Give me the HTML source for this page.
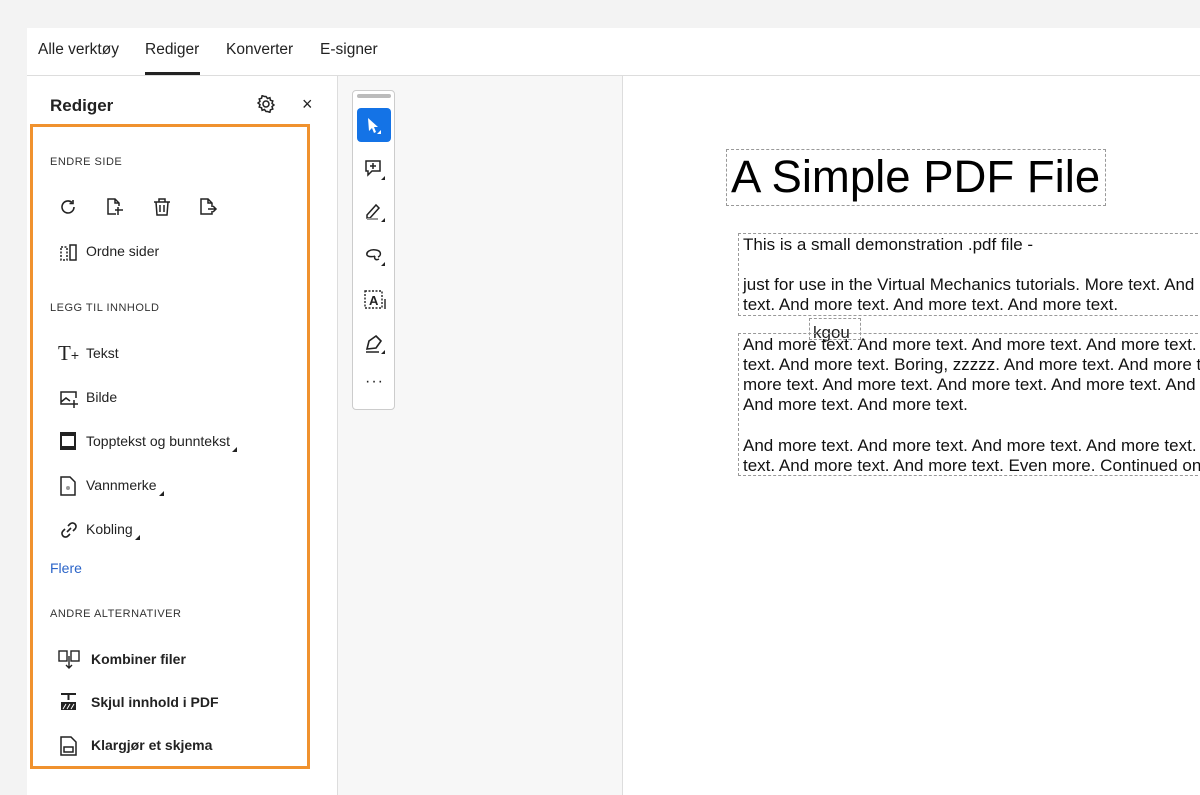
<!DOCTYPE html>
<html><head><style>
*{margin:0;padding:0;box-sizing:border-box}
body{width:1200px;height:795px;overflow:hidden;background:#f3f3f3;font-family:"Liberation Sans",sans-serif;color:#222;position:relative}
.abs{position:absolute}
.tabs{left:27px;top:28px;width:1173px;height:48px;background:#fff;border-bottom:1px solid #ddd}
.tab{position:absolute;top:13px;font-size:15.5px;color:#222}
.panel{left:27px;top:76px;width:311px;height:719px;background:#fff;border-right:1px solid #ddd}
.mid{left:338px;top:76px;width:284px;height:719px;background:#f7f7f7}
.page{left:622px;top:76px;width:578px;height:719px;background:#fff;border-left:1px solid #ddd;overflow:hidden}
.hl{left:30px;top:124px;width:280px;height:645px;border:3px solid #f0922e}
.sec{position:absolute;left:50px;font-size:11px;letter-spacing:.5px;color:#333}
.item{position:absolute;left:86px;font-size:14px;color:#222}
.b{font-weight:bold;left:91px}
.ic{position:absolute}
.tri{display:inline-block;width:0;height:0;border-left:5px solid transparent;border-bottom:5px solid #222;margin-left:2px;vertical-align:-6px}
.tb{left:352px;top:90px;width:43px;height:320px;background:#fff;border:1px solid #ccc;border-radius:4px}
.dot{border:1px dashed #999}
.pt{font-size:17px;color:#111;line-height:20px;white-space:nowrap}
</style></head><body>
<div class="abs tabs">
<span class="tab" style="left:11px">Alle verktøy</span>
<span class="tab" style="left:118px">Rediger</span>
<div class="abs" style="left:118px;top:44px;width:55px;height:3px;background:#222"></div>
<span class="tab" style="left:199px">Konverter</span>
<span class="tab" style="left:293px">E-signer</span>
</div>
<div class="abs panel"></div>
<div class="abs mid"></div>
<div class="abs page">
<div class="abs dot" style="left:103px;top:73px;width:380px;height:57px"></div>
<div class="abs" style="left:108px;top:75px;font-size:45.5px;color:#000;line-height:52px;white-space:nowrap">A Simple PDF File</div>
<div class="abs dot" style="left:115px;top:157px;width:470px;height:83px"></div>
<div class="abs pt" style="left:120px;top:159px">This is a small demonstration .pdf file -</div>
<div class="abs pt" style="left:120px;top:199px">just for use in the Virtual Mechanics tutorials. More text. And more<br>text. And more text. And more text. And more text.</div>
<div class="abs dot" style="left:186px;top:242px;width:52px;height:22px"></div>
<div class="abs" style="left:190px;top:247px;font-size:17px">kgou</div>
<div class="abs dot" style="left:115px;top:257px;width:470px;height:143px"></div>
<div class="abs pt" style="left:120px;top:259px">And more text. And more text. And more text. And more text. And more<br>text. And more text. Boring, zzzzz. And more text. And more text. And<br>more text. And more text. And more text. And more text. And more<br>And more text. And more text.</div>
<div class="abs pt" style="left:120px;top:360px">And more text. And more text. And more text. And more text. And more<br>text. And more text. And more text. Even more. Continued on page 2 ...</div>
</div>
<div class="abs" style="left:50px;top:96px;font-size:17px;font-weight:bold">Rediger</div>
<svg class="ic" style="left:257px;top:95px" width="18" height="18" viewBox="0 0 18 18" fill="none" stroke="#222" stroke-width="1.5"><circle cx="9" cy="9" r="3"/><path d="M9 1.5l1.5 2 2.4-.8.5 2.5 2.4.8-.8 2.4 2 1.6-2 1.6.8 2.4-2.4.8-.5 2.5-2.4-.8L9 16.5l-1.5-2-2.4.8-.5-2.5-2.4-.8.8-2.4-2-1.6 2-1.6-.8-2.4 2.4-.8.5-2.5 2.4.8z"/></svg>
<div class="abs" style="left:302px;top:94px;font-size:18px">×</div>
<div class="abs hl"></div>
<div class="sec" style="top:156px">ENDRE SIDE</div>
<svg class="ic" style="left:59px;top:198px" width="18" height="18" viewBox="0 0 18 18" fill="none" stroke="#222" stroke-width="1.6"><path d="M15 9a6 6 0 1 1-2-4.5"/><path d="M14 2v3.5h-3.5"/></svg>
<svg class="ic" style="left:105px;top:197px" width="20" height="20" viewBox="0 0 20 20" fill="none" stroke="#222" stroke-width="1.5"><path d="M11 17H3V2h7l4 4v3"/><path d="M10 2v4h4M13 10v8M10 13h8"/></svg>
<svg class="ic" style="left:152px;top:197px" width="20" height="20" viewBox="0 0 20 20" fill="none" stroke="#222" stroke-width="1.5"><path d="M2 5h16M7 5V2h6v3M4 5l1 13h10l1-13M8 8v7M12 8v7"/></svg>
<svg class="ic" style="left:198px;top:197px" width="20" height="20" viewBox="0 0 20 20" fill="none" stroke="#222" stroke-width="1.5"><path d="M14 10V6l-4-4H3v15h11v-3"/><path d="M10 2v4h4M10 12h8M15 9l3 3-3 3"/></svg>
<svg class="ic" style="left:58px;top:242px" width="20" height="20" viewBox="0 0 20 20" fill="none" stroke="#222" stroke-width="1.5"><rect x="12" y="3" width="6" height="15"/><path d="M3 5h6v13H3z" stroke-dasharray="2 1.5"/></svg>
<div class="item" style="top:243px">Ordne sider</div>
<div class="sec" style="top:302px">LEGG TIL INNHOLD</div>
<div class="ic" style="left:58px;top:341px;font-family:'Liberation Serif';font-size:21px">T<span style="font-size:14px;font-family:'Liberation Sans'">+</span></div>
<div class="item" style="top:345px">Tekst</div>
<svg class="ic" style="left:59px;top:389px" width="20" height="20" viewBox="0 0 20 20" fill="none" stroke="#222" stroke-width="1.5"><path d="M12 15H2V3h15v6M2 13l5-4 4 3M15 11v8M11 15h8"/></svg>
<div class="item" style="top:389px">Bilde</div>
<svg class="ic" style="left:60px;top:432px" width="16" height="18" viewBox="0 0 16 18"><rect x="0" y="0" width="16" height="18" fill="#222"/><rect x="2" y="4" width="12" height="10" fill="#fff"/></svg>
<div class="item" style="top:433px">Topptekst og bunntekst<span class="tri"></span></div>
<svg class="ic" style="left:60px;top:476px" width="16" height="20" viewBox="0 0 16 20" fill="none" stroke="#222" stroke-width="1.5"><path d="M1 1h9l5 5v13H1z"/><circle cx="8" cy="12" r="2" fill="#999" stroke="none"/></svg>
<div class="item" style="top:477px">Vannmerke<span class="tri"></span></div>
<svg class="ic" style="left:59px;top:520px" width="20" height="20" viewBox="0 0 20 20" fill="none" stroke="#222" stroke-width="1.6"><path d="M8 12l4-4M9 6l2-2a3 3 0 0 1 5 5l-2 2M11 14l-2 2a3 3 0 0 1-5-5l2-2"/></svg>
<div class="item" style="top:521px">Kobling<span class="tri"></span></div>
<div class="abs" style="left:50px;top:560px;font-size:14px;color:#2b64c8">Flere</div>
<div class="sec" style="top:608px">ANDRE ALTERNATIVER</div>
<svg class="ic" style="left:58px;top:650px" width="22" height="20" viewBox="0 0 22 20" fill="none" stroke="#222" stroke-width="1.4"><rect x="1" y="1" width="8" height="10"/><rect x="13" y="1" width="8" height="10"/><path d="M11 6v12M8 15l3 3 3-3"/></svg>
<div class="item b" style="top:651px">Kombiner filer</div>
<svg class="ic" style="left:60px;top:693px" width="17" height="18" viewBox="0 0 17 18"><path d="M1 1h15M8.5 1v6" stroke="#222" stroke-width="2"/><rect x="1" y="9" width="15" height="8" fill="#222"/><path d="M3 16l3-5M7 16l3-5M11 16l3-5" stroke="#fff"/></svg>
<div class="item b" style="top:694px">Skjul innhold i PDF</div>
<svg class="ic" style="left:60px;top:736px" width="17" height="20" viewBox="0 0 17 20" fill="none" stroke="#222" stroke-width="1.5"><path d="M1 1h10l5 5v13H1z"/><rect x="4" y="11" width="9" height="5"/></svg>
<div class="item b" style="top:737px">Klargjør et skjema</div>

<div class="abs tb">
<div class="abs" style="left:4px;top:3px;width:34px;height:4px;background:#bbb;border-radius:2px"></div>
<div class="abs" style="left:4px;top:17px;width:34px;height:34px;background:#1473e6;border-radius:4px"></div>
<svg class="abs" style="left:14px;top:26px" width="16" height="18" viewBox="0 0 16 18"><path d="M1 1l10 9H7l2 5-2 1-2-5-3 3z" fill="#fff"/><path d="M14 13v4h-4z" fill="#fff"/></svg>
<svg class="abs" style="left:11px;top:68px" width="22" height="22" viewBox="0 0 22 22" fill="none" stroke="#222" stroke-width="1.5"><path d="M2 2h14v10H8l-4 4v-4H2z"/><path d="M9 4v6M6 7h6"/><path d="M21 17v4h-4z" fill="#222" stroke="none"/></svg>
<svg class="abs" style="left:11px;top:110px" width="22" height="22" viewBox="0 0 22 22" fill="none" stroke="#222" stroke-width="1.5"><path d="M3 14l9-10 3 3-9 10H3z"/><path d="M3 18h11" stroke="#999" stroke-width="2"/><path d="M21 17v4h-4z" fill="#222" stroke="none"/></svg>
<svg class="abs" style="left:11px;top:154px" width="22" height="22" viewBox="0 0 22 22" fill="none" stroke="#222" stroke-width="1.5"><path d="M14 12c3-1 4-6-2-7-6-1-10 2-9 5 1 2 6 2 8 1M11 11c-1 2 0 5 4 3"/><path d="M21 17v4h-4z" fill="#222" stroke="none"/></svg>
<svg class="abs" style="left:11px;top:198px" width="22" height="22" viewBox="0 0 22 22" fill="none" stroke="#222" stroke-width="1.4"><rect x="1" y="2" width="17" height="17" stroke-dasharray="2 1.5"/><text x="5" y="16" font-size="13" font-family="Liberation Sans" fill="#222" stroke="none" font-weight="bold">A</text><path d="M21 10v10" /></svg>
<svg class="abs" style="left:11px;top:242px" width="22" height="22" viewBox="0 0 22 22" fill="none" stroke="#222" stroke-width="1.6"><path d="M3 16l2-8 7-5 5 5-5 7zM12 3l5 5M2 19h13"/><path d="M21 17v4h-4z" fill="#222" stroke="none"/></svg>
<div class="abs" style="left:12px;top:282px;font-size:16px;letter-spacing:1px">···</div>
</div>
</body></html>
